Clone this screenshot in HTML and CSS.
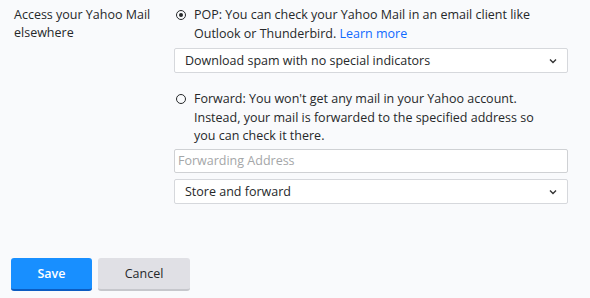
FILE: index.html
```html
<!DOCTYPE html>
<html lang="en">
<head>
    <meta charset="UTF-8">
    <meta name="viewport" content="width=device-width, initial-scale=1.0">
    <title>Access your Yahoo Mail elsewhere</title>
    <link rel="stylesheet" href="styles.css">
</head>
<body>

<div class="settings-row">
    <div class="settings-label">Access your Yahoo Mail elsewhere</div>
    <div class="settings-options">
        <label class="radio-option">
            <span class="radio checked"></span>
            <span class="radio-text">POP: You can check your Yahoo Mail in an email client like Outlook or Thunderbird. <a href="#" class="learn-more">Learn more</a></span>
        </label>
        <div class="select-box pop-select">
            <span>Download spam with no special indicators</span>
            <svg class="chevron" width="8" height="6" viewBox="0 0 8 6"><path d="M1 1.5 L4 4.5 L7 1.5" fill="none" stroke="#333" stroke-width="1.4"/></svg>
        </div>

        <label class="radio-option forward-option">
            <span class="radio"></span>
            <span class="radio-text">Forward: You won't get any mail in your Yahoo account. Instead, your mail is forwarded to the specified address so you can check it there.</span>
        </label>
        <div class="text-input">Forwarding Address</div>
        <div class="select-box forward-select">
            <span>Store and forward</span>
            <svg class="chevron" width="8" height="6" viewBox="0 0 8 6"><path d="M1 1.5 L4 4.5 L7 1.5" fill="none" stroke="#333" stroke-width="1.4"/></svg>
        </div>
    </div>
</div>

<div class="actions">
    <button class="btn btn-save">Save</button>
    <button class="btn btn-cancel">Cancel</button>
</div>

</body>
</html>
```

FILE: styles.css
```css
body {
    margin: 0;
    background-color: #f9fafc;
    font-family: "Open Sans", "Noto Sans", sans-serif;
    font-size: 12.5px;
    color: #26282a;
}

.settings-row {
    display: grid;
    grid-template-columns: 160px 394px;
    padding: 6px 0 0 14px;
}

.settings-label {
    line-height: 18px;
    width: 150px;
}

.settings-options {
    display: flex;
    flex-direction: column;
}

.radio-option {
    display: flex;
    align-items: flex-start;
    line-height: 18.5px;
}

.radio {
    flex: none;
    width: 8px;
    height: 8px;
    margin: 4px 8px 0 2px;
    border: 1px solid #26282a;
    border-radius: 50%;
    position: relative;
}

.radio.checked::after {
    content: "";
    position: absolute;
    top: 2px;
    left: 2px;
    width: 4px;
    height: 4px;
    border-radius: 50%;
    background-color: #26282a;
}

.radio-text {
    width: 352px;
}

.learn-more {
    color: #0f69ff;
    text-decoration: none;
}

.select-box,
.text-input {
    box-sizing: border-box;
    display: flex;
    align-items: center;
    justify-content: space-between;
    background-color: #fff;
    border: 1px solid #d6d8dc;
    border-radius: 2px;
    padding: 0 10px 0 10px;
}

.select-box {
    height: 25px;
}

.pop-select {
    margin-top: 5px;
}

.forward-option {
    margin-top: 17px;
}

.text-input {
    height: 24px;
    margin-top: 3px;
    padding-left: 3px;
    color: #a4a6a8;
    border-color: #cfd1d4;
}

.forward-select {
    margin-top: 6px;
}

.chevron {
    margin-top: 1px;
}

.actions {
    display: flex;
    gap: 6px;
    padding: 54px 0 0 11px;
}

.btn {
    height: 33px;
    border: none;
    border-radius: 3px;
    font-family: inherit;
    font-size: 12.5px;
    cursor: pointer;
}

.btn-save {
    width: 81px;
    background-color: #188fff;
    color: #fff;
    font-weight: 600;
    border-bottom: 2px solid #0b5cc2;
}

.btn-cancel {
    width: 92px;
    background-color: #e0e0e5;
    color: #26282a;
    border-bottom: 2px solid #c6c7cc;
}
```
